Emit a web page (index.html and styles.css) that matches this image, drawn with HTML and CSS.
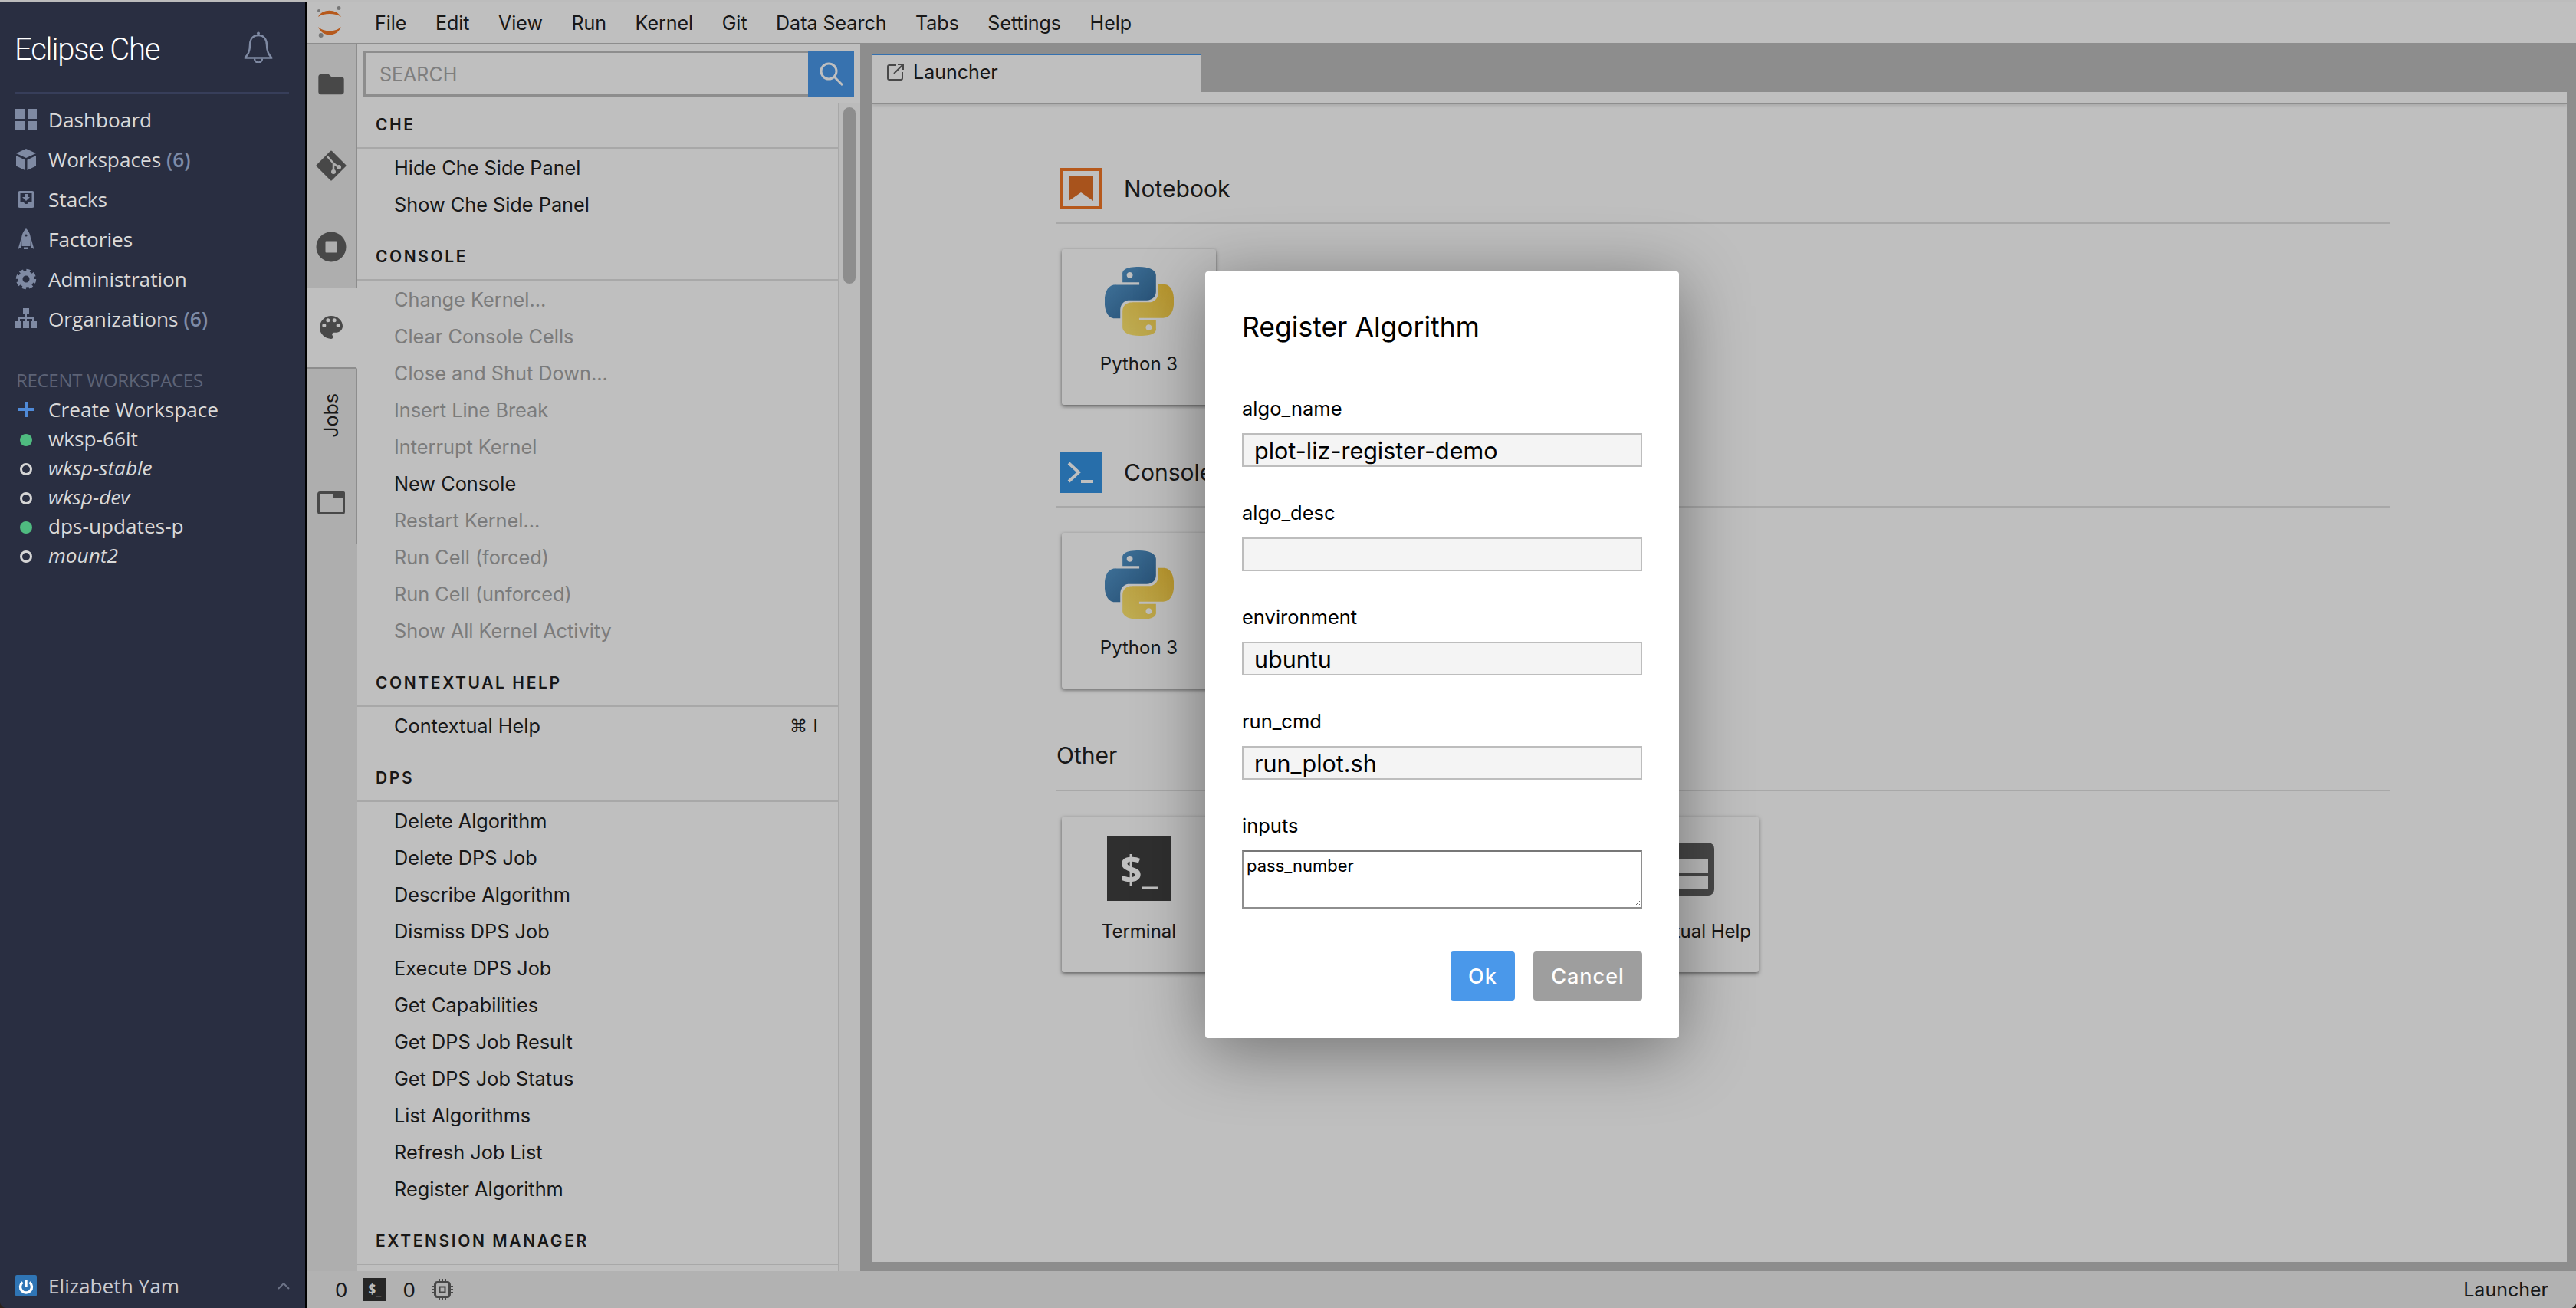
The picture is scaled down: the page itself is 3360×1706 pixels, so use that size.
FILE: index.html
```html
<!DOCTYPE html>
<html lang="en">
<head>
<meta charset="utf-8">
<title>Eclipse Che</title>
<link rel="stylesheet" href="styles.css">
</head>
<body>
<svg class="defs" aria-hidden="true">
  <defs>
    <linearGradient id="pyblue" x1="0" y1="0" x2="1" y2="1"><stop offset="0" stop-color="#5a9fd4"/><stop offset="1" stop-color="#2f6596"/></linearGradient>
    <linearGradient id="pyyellow" x1="0" y1="1" x2="1" y2="0"><stop offset="0" stop-color="#ffe873"/><stop offset="1" stop-color="#f5c63a"/></linearGradient>
    <symbol id="python" viewBox="0 0 24 24">
      <path fill="url(#pyblue)" fill-rule="evenodd" d="M14.25.18l.9.2.73.26.59.3.45.32.34.34.25.34.16.33.1.3.04.26.02.2-.01.13V8.5l-.05.63-.13.55-.21.46-.26.38-.3.31-.33.25-.35.19-.35.14-.33.1-.3.07-.26.04-.21.02H8.77l-.69.05-.59.14-.5.22-.41.27-.33.32-.27.35-.2.36-.15.37-.1.35-.07.32-.04.27-.02.21v3.06H3.17l-.21-.03-.28-.07-.32-.12-.35-.18-.36-.26-.36-.36-.35-.46-.32-.59-.28-.73-.21-.88-.14-1.05-.05-1.23.06-1.22.16-1.04.24-.87.32-.71.36-.57.4-.44.42-.33.42-.24.4-.16.36-.1.32-.05.24-.01h.16l.06.01h8.16v-.83H6.18l-.01-2.75-.02-.37.05-.34.11-.31.17-.28.25-.26.31-.23.38-.2.44-.18.51-.15.58-.12.64-.1.71-.06.77-.04.84-.02 1.27.05zm-6.3 1.98l-.23.33-.08.41.08.41.23.34.33.22.41.09.41-.09.33-.22.23-.34.08-.41-.08-.41-.23-.33-.33-.22-.41-.09-.41.09z"/>
      <path fill="url(#pyyellow)" fill-rule="evenodd" d="M21.04 6.11l.28.06.32.12.35.18.36.27.36.35.35.47.32.59.28.73.21.88.14 1.04.05 1.23-.06 1.23-.16 1.04-.24.86-.32.71-.36.57-.4.45-.42.33-.42.24-.4.16-.36.09-.32.05-.24.02-.16-.01h-8.22v.82h5.84l.01 2.76.02.36-.05.34-.11.31-.17.29-.25.25-.31.24-.38.2-.44.17-.51.15-.58.13-.64.09-.71.07-.77.04-.84.01-1.27-.04-1.07-.14-.9-.2-.73-.25-.59-.3-.45-.33-.34-.34-.25-.34-.16-.33-.1-.3-.04-.25-.02-.2.01-.13v-5.34l.05-.64.13-.54.21-.46.26-.38.3-.32.33-.24.35-.2.35-.14.33-.1.3-.06.26-.04.21-.02.13-.01h5.84l.69-.05.59-.14.5-.21.41-.28.33-.32.27-.35.2-.36.15-.36.1-.35.07-.32.04-.28.02-.21V6.07h2.09l.14.01zm-6.47 14.25l-.23.33-.08.41.08.41.23.33.33.23.41.08.41-.08.33-.23.23-.33.08-.41-.08-.41-.23-.33-.33-.23-.41-.08-.41.08z"/>
    </symbol>
  </defs>
</svg>
<div class="app">
  <aside class="che-nav">
    <header class="che-head">
      <h1 class="che-title">Eclipse Che</h1>
      <svg class="bell" viewBox="0 0 38 42"><path d="M19 6C11 6 8 12 8 19c0 8-2 12-6.500 16.500h35C32 31 30 27 30 19c0-7-3-13-11-13z" fill="none" stroke="#7f8aa3" stroke-width="2.400" stroke-linejoin="round"/><circle cx="19" cy="3.500" r="2" fill="#7f8aa3"/><path d="M14 36.500a5 5 0 0 0 10 0" fill="none" stroke="#7f8aa3" stroke-width="2.400"/></svg>
    </header>
    <nav class="che-menu">
      <a class="che-item"><svg class="che-ico" viewBox="0 0 28 28"><path d="M0 0h12v13H0zM16 0h12v13H16zM0 16h12v12H0zM16 16h12v12H16z"/></svg>Dashboard</a>
      <a class="che-item"><svg class="che-ico" viewBox="0 0 28 28"><path d="M14 0l13 6-13 6L1 6zM1 9l11.500 5.500V28L1 22.500zM27 9l-11.500 5.500V28L27 22.500z"/></svg>Workspaces&nbsp;<b class="count">(6)</b></a>
      <a class="che-item"><svg class="che-ico" viewBox="0 0 28 28"><rect x="3.500" y="3" width="21" height="22" rx="2.500"/><path class="cut" d="M6.500 6h15v11h-4l-2 3h-3l-2-3h-4z"/><path d="M12 7h4v4h3l-5 5-5-5h3z"/></svg>Stacks</a>
      <a class="che-item"><svg class="che-ico" viewBox="0 0 28 28"><path d="M14 0c4 3.500 6 9 6 14l-.5 9h-11L8 14c0-5 2-10.500 6-14zM7 15L3.500 27l4.500-2.500zM21 15l3.500 12-4.500-2.500zM11 24.500h6V27h-6z"/><circle class="cut" cx="14" cy="9" r="1.600"/></svg>Factories</a>
      <a class="che-item"><svg class="che-ico" viewBox="0 0 28 28"><circle class="ring" cx="14" cy="14" r="7.500"/><circle class="teeth" cx="14" cy="14" r="11.200"/></svg>Administration</a>
      <a class="che-item"><svg class="che-ico" viewBox="0 0 28 28"><path d="M10 0h8v8h-8zM13 8h2v4h9v5h-2v-3h-7v3h-2v-3H6v3H4v-5h9zM0 17h8v9H0zM10 17h8v9h-8zM20 17h8v9h-8z"/></svg>Organizations&nbsp;<b class="count">(6)</b></a>
    </nav>
    <section class="recent">
      <h2 class="recent-title">RECENT WORKSPACES</h2>
      <a class="recent-item"><svg class="plus" viewBox="0 0 20 20"><path d="M8 0h4v8h8v4h-8v8H8v-8H0V8h8z"/></svg>Create Workspace</a>
      <a class="recent-item"><i class="dot on"></i>wksp-66it</a>
      <a class="recent-item stopped"><i class="dot"></i>wksp-stable</a>
      <a class="recent-item stopped"><i class="dot"></i>wksp-dev</a>
      <a class="recent-item"><i class="dot on"></i>dps-updates-p</a>
      <a class="recent-item stopped"><i class="dot"></i>mount2</a>
    </section>
    <footer class="user">
      <svg class="avatar" viewBox="0 0 28 28"><rect width="28" height="28" rx="2" fill="#2f75b5"/><path d="M9.500 9.500a7.500 7.500 0 1 0 9 0" fill="none" stroke="#fff" stroke-width="3.400"/><path d="M14 6v9" stroke="#fff" stroke-width="3.400"/></svg>
      <span class="user-name">Elizabeth Yam</span>
      <svg class="chevron" viewBox="0 0 16 9"><path d="M1 8l7-7 7 7" fill="none" stroke="#6d7488" stroke-width="2"/></svg>
    </footer>
  </aside>

  <div class="lab">
    <div class="menubar">
      <svg class="jup" viewBox="0 0 36 42"><path class="o" d="M3 14C8 3 27 3 33 14 26 8.500 10 8.500 3 14z"/><path class="o" d="M3 27C9 41 27 41 33 27 26 34 10 34 3 27z"/><circle class="g" cx="4" cy="6" r="2"/><circle class="g" cx="30" cy="2.500" r="2.500"/><circle class="g" cx="6.700" cy="38" r="3"/></svg>
      <a class="menu-item">File</a><a class="menu-item">Edit</a><a class="menu-item">View</a><a class="menu-item">Run</a><a class="menu-item">Kernel</a><a class="menu-item">Git</a><a class="menu-item">Data Search</a><a class="menu-item">Tabs</a><a class="menu-item">Settings</a><a class="menu-item">Help</a>
    </div>
    <div class="workspace">
      <div class="tabbar">
        <div class="side-tab"><svg class="ti" viewBox="0 0 24 24"><path d="M10 4H4c-1.100 0-2 .9-2 2v12c0 1.100.9 2 2 2h16c1.100 0 2-.9 2-2V8c0-1.100-.9-2-2-2h-8l-2-2z"/></svg></div>
        <div class="side-tab"><svg class="ti" viewBox="0 0 40 40"><path d="M20 2l18 18-18 18L2 20z" stroke="#616161" stroke-width="3" stroke-linejoin="round"/><path class="tl" d="M15 8l8 9v10M23 17l7 5.500"/><circle class="tc" cx="23" cy="28" r="3"/><circle class="tc" cx="30" cy="22" r="3"/></svg></div>
        <div class="side-tab"><svg class="ti" viewBox="0 0 40 40"><circle cx="20" cy="20" r="19.500"/><rect class="tc" x="12.500" y="12.500" width="15" height="15" rx="1"/></svg></div>
        <div class="side-tab active"><svg class="ti" viewBox="0 0 24 24"><path fill-rule="evenodd" d="M12 3a9 9 0 0 0 0 18c.83 0 1.500-.67 1.500-1.500 0-.39-.15-.74-.39-1.010-.23-.26-.38-.61-.38-.99 0-.83.67-1.500 1.500-1.500H16c2.760 0 5-2.240 5-5 0-4.420-4.030-8-9-8zm-5.500 9a1.500 1.500 0 1 1 0-3 1.500 1.500 0 0 1 0 3zm3-4a1.500 1.500 0 1 1 0-3 1.500 1.500 0 0 1 0 3zm5 0a1.500 1.500 0 1 1 0-3 1.500 1.500 0 0 1 0 3zm3 4a1.500 1.500 0 1 1 0-3 1.500 1.500 0 0 1 0 3z"/></svg></div>
        <div class="side-tab jobs"><span class="jobs-label">Jobs</span></div>
        <div class="side-tab"><svg class="ti wide" viewBox="0 0 36 30"><rect x="1.500" y="1.500" width="33" height="27" rx="2" fill="none" stroke="#616161" stroke-width="3"/><path d="M20 0h14a2 2 0 0 1 2 2v7H20z"/></svg></div>
      </div>

      <div class="sidepanel">
        <div class="search-row">
          <div class="search-box">SEARCH</div>
          <button class="search-btn"><svg class="search-ico" viewBox="0 0 32 32"><circle cx="13" cy="13" r="10" fill="none" stroke="#fff" stroke-width="3"/><path d="M20 20l11 11" stroke="#fff" stroke-width="3"/></svg></button>
        </div>
        <div class="palette">
          <div class="palette-list">
            <section class="pal-sec"><h3 class="pal-head">CHE</h3>
              <ul class="pal-items"><li>Hide Che Side Panel</li><li>Show Che Side Panel</li></ul></section>
            <section class="pal-sec"><h3 class="pal-head">CONSOLE</h3>
              <ul class="pal-items">
                <li class="off">Change Kernel...</li><li class="off">Clear Console Cells</li><li class="off">Close and Shut Down...</li><li class="off">Insert Line Break</li><li class="off">Interrupt Kernel</li><li>New Console</li><li class="off">Restart Kernel...</li><li class="off">Run Cell (forced)</li><li class="off">Run Cell (unforced)</li><li class="off">Show All Kernel Activity</li>
              </ul></section>
            <section class="pal-sec"><h3 class="pal-head">CONTEXTUAL HELP</h3>
              <ul class="pal-items"><li>Contextual Help<span class="kbd">⌘ I</span></li></ul></section>
            <section class="pal-sec"><h3 class="pal-head">DPS</h3>
              <ul class="pal-items">
                <li>Delete Algorithm</li><li>Delete DPS Job</li><li>Describe Algorithm</li><li>Dismiss DPS Job</li><li>Execute DPS Job</li><li>Get Capabilities</li><li>Get DPS Job Result</li><li>Get DPS Job Status</li><li>List Algorithms</li><li>Refresh Job List</li><li>Register Algorithm</li>
              </ul></section>
            <section class="pal-sec"><h3 class="pal-head">EXTENSION MANAGER</h3></section>
          </div>
          <div class="scrolltrack"><div class="scrollthumb"></div></div>
        </div>
      </div>

      <main class="dock">
        <div class="doc-tabs">
          <div class="doc-tab"><svg class="doc-ico" viewBox="0 0 22 22"><path d="M12 2H3a2 2 0 0 0-2 2v15a2 2 0 0 0 2 2h15a2 2 0 0 0 2-2v-8M9 13L21 1M14 1h7v7" fill="none" stroke="#616161" stroke-width="2"/></svg>Launcher</div>
        </div>
        <div class="doc-body">
          <div class="doc-strip"></div>
          <div class="launcher">
            <section class="lsec">
              <div class="lsec-head"><svg class="lsec-ico" viewBox="0 0 54 54"><rect x="2" y="2" width="50" height="50" fill="none" stroke="#f37726" stroke-width="4"/><path fill="#e06f26" d="M11 11h32v32L27 32 11 43z"/></svg><h2 class="lsec-title">Notebook</h2></div>
              <div class="cards">
                <div class="card"><div class="card-ico"><svg class="py"><use href="#python"/></svg></div><div class="card-label">Python 3</div></div>
              </div>
            </section>
            <section class="lsec">
              <div class="lsec-head"><svg class="lsec-ico" viewBox="0 0 54 54"><rect width="54" height="54" fill="#3593e3"/><path d="M11 15l13 12-13 12" fill="none" stroke="#fff" stroke-width="4"/><path d="M27 37h16v4H27z" fill="#fff"/></svg><h2 class="lsec-title">Console</h2></div>
              <div class="cards">
                <div class="card"><div class="card-ico"><svg class="py"><use href="#python"/></svg></div><div class="card-label">Python 3</div></div>
              </div>
            </section>
            <section class="lsec">
              <div class="lsec-head"><h2 class="lsec-title plain">Other</h2></div>
              <div class="cards">
                <div class="card"><div class="card-ico"><div class="term">$_</div></div><div class="card-label">Terminal</div></div>
                <div class="card"><div class="card-ico"></div><div class="card-label">Text File</div></div>
                <div class="card"><div class="card-ico"></div><div class="card-label">Markdown</div></div>
                <div class="card"><div class="card-ico"><svg class="help" viewBox="0 0 85 69"><rect width="85" height="69" rx="8" fill="#616161"/><path fill="#fff" d="M8 22h69v17H8zM8 44h69v16H8z"/></svg></div><div class="card-label">Contextual Help</div></div>
              </div>
            </section>
          </div>
        </div>
      </main>
    </div>
    <div class="statusbar">
      <span class="st-num">0</span>
      <span class="st-term">$_</span>
      <span class="st-num">0</span>
      <svg class="st-chip" viewBox="0 0 28 28"><rect x="4.500" y="4.500" width="19" height="19" rx="3" fill="none" stroke="#616161" stroke-width="3"/><rect x="10.500" y="10.500" width="7" height="7" fill="none" stroke="#616161" stroke-width="2"/><path d="M10 0v4M14 0v4M18 0v4M10 24v4M14 24v4M18 24v4M0 10h4M0 14h4M0 18h4M24 10h4M24 14h4M24 18h4" stroke="#616161" stroke-width="2"/></svg>
      <span class="st-right">Launcher</span>
    </div>

    <div class="overlay">
      <div class="dialog">
        <h2 class="dlg-title">Register Algorithm</h2>
        <label class="fld"><span class="fld-label">algo_name</span><span class="fld-input">plot-liz-register-demo</span></label>
        <label class="fld"><span class="fld-label">algo_desc</span><span class="fld-input"></span></label>
        <label class="fld"><span class="fld-label">environment</span><span class="fld-input">ubuntu</span></label>
        <label class="fld"><span class="fld-label">run_cmd</span><span class="fld-input">run_plot.sh</span></label>
        <label class="fld"><span class="fld-label">inputs</span><textarea class="fld-area">pass_number</textarea></label>
        <div class="dlg-actions">
          <button class="btn ok">Ok</button>
          <button class="btn cancel">Cancel</button>
        </div>
      </div>
    </div>
  </div>
</div>
</body>
</html>
```
FILE: styles.css
```css
* { box-sizing: border-box; }
html, body { margin: 0; padding: 0; height: 100%; overflow: hidden; background: #2a211a; }
h1, h2, h3, ul { margin: 0; padding: 0; font-weight: normal; }
ul { list-style: none; }
button { border: 0; padding: 0; font: inherit; }
.defs { position: absolute; width: 0; height: 0; }

.app { display: flex; width: 3360px; height: 1706px; border-top: 2px solid #bcbcbc; border-radius: 0 0 8px 8px; overflow: hidden; }

/* Che navigation */
.che-nav { width: 400px; flex: none; display: flex; flex-direction: column; background: #292e41; border-right: 2px solid #000; font-family: "Open Sans", sans-serif; color: #d9d9d9; }
.che-head { height: 120px; margin: 0 21px 0 20px; border-bottom: 2px solid #373e5a; display: flex; justify-content: space-between; align-items: flex-start; }
.che-title { font-family: Roboto, "Liberation Sans", sans-serif; font-size: 40px; letter-spacing: -1.200px; color: #fff; margin: 40px 0 0 -1px; line-height: 46px; font-weight: 300; }
.bell { width: 38px; height: 42px; margin: 38px 21px 0 0; }
.che-menu { padding-top: 8px; }
.che-item { height: 52px; display: flex; align-items: center; font-size: 26.200px; padding-left: 20px; }
.che-ico { width: 28px; height: 28px; margin-right: 15px; flex: none; fill: #7f8aa3; }
.che-ico .cut { fill: #292e41; }
.che-ico .ring { fill: none; stroke: #7f8aa3; stroke-width: 6; }
.che-ico .teeth { fill: none; stroke: #7f8aa3; stroke-width: 4; stroke-dasharray: 5 3.800; }
.count { font-weight: 600; color: #7e8ba6; }
.recent { margin-top: 35px; }
.recent-title { height: 38px; line-height: 38px; padding-left: 21px; font-size: 24px; letter-spacing: -0.3px; color: #5d6376; }
.recent-item { height: 38px; display: flex; align-items: center; font-size: 26.200px; padding-left: 26px; }
.recent-item.stopped { font-style: italic; }
.plus { width: 20px; height: 20px; fill: #4f8ad8; margin-left: -2px; margin-right: 19px; flex: none; }
.dot { width: 16px; height: 16px; border-radius: 50%; margin-right: 21px; margin-top: 4px; flex: none; border: 3px solid #d5d5d5; }
.dot.on { background: #4fbb80; border-color: #4fbb80; }
.user { margin-top: auto; height: 58px; display: flex; align-items: center; padding: 0 20px; font-size: 26.200px; }
.avatar { width: 28px; height: 28px; margin-right: 15px; flex: none; }
.user-name { flex: 1; color: #c9cbd1; }
.chevron { width: 16px; height: 9px; flex: none; }

/* JupyterLab shell */
.lab { flex: 1; position: relative; display: flex; flex-direction: column; background: #fff; font-family: Inter, "Liberation Sans", sans-serif; color: #212121; }
.menubar { height: 55px; flex: none; display: flex; align-items: center; border-bottom: 1px solid #bdbdbd; padding: 2px 0 0 12px; font-size: 25px; }
.jup { width: 36px; height: 42px; margin: -2px 25px 0 0; flex: none; }
.jup .o { fill: #f37726; }
.jup .g { fill: #9e9e9e; }
.menu-item { padding: 0 21.500px 0 16px; }

.workspace { flex: 1; min-height: 0; display: flex; background: #bdbdbd; }
.tabbar { width: 66px; flex: none; background: #e8e8e8; }
.side-tab { height: 106px; width: 66px; display: flex; align-items: center; justify-content: center; background: #e8e8e8; border-right: 2px solid #bdbdbd; }
.side-tab.active { background: #fff; border-right-color: #fff; border-bottom: 2px solid #bdbdbd; }
.side-tab.jobs { height: 122px; }
.jobs-label { writing-mode: vertical-rl; transform: rotate(180deg); font-size: 25px; }
.ti { width: 40px; height: 40px; fill: #616161; }
.ti.wide { width: 36px; height: 30px; }
.ti .tl { fill: none; stroke: #e8e8e8; stroke-width: 2.500; }
.ti .tc { fill: #e8e8e8; }
.sidepanel { width: 656px; flex: none; display: flex; flex-direction: column; background: #fff; }
.search-row { height: 77px; flex: none; display: flex; padding: 9px 8px 8px; }
.search-box { flex: 1; height: 60px; border: 3px solid #bdbdbd; border-right: 0; padding: 1px 0 0 18px; line-height: 54px; font-size: 25px; color: #a9a9a9; }
.search-btn { width: 60px; height: 60px; background: #4a98ea; display: flex; align-items: center; justify-content: center; flex: none; }
.search-ico { width: 32px; height: 32px; }
.palette { flex: 1; min-height: 0; display: flex; overflow: hidden; }
.palette-list { flex: 1; min-width: 0; }
.scrolltrack { width: 29px; flex: none; border-left: 2px solid #e0e0e0; padding: 6px 6px 0 5px; background: #fafafa; }
.scrollthumb { height: 230px; border-radius: 8px; background: #bdbdbd; }
.pal-sec { margin-bottom: 15px; }
.pal-head { height: 60px; padding: 16px 0 0 24px; line-height: 26px; border-bottom: 2px solid #e0e0e0; font-size: 21px; font-weight: 600; letter-spacing: 2.600px; color: #1f1f1f; }
.pal-items { margin-top: 1px; font-size: 25.300px; }
.pal-items li { height: 48px; line-height: 48px; padding: 0 26px 0 48px; display: flex; justify-content: space-between; }
.pal-items li.off { color: #a5a5a5; }
.kbd { font-family: "DejaVu Sans", sans-serif; font-size: 23px; }

.dock { flex: 1; min-width: 0; display: flex; flex-direction: column; padding: 13px 12px 12px 16px; }
.doc-tabs { height: 50px; flex: none; display: flex; }
.doc-tab { width: 428px; background: #fff; border-top: 2px solid #4696ea; display: flex; align-items: center; padding: 0 0 4px 19px; font-size: 25px; height: 50px; }
.doc-ico { width: 22px; height: 22px; margin-right: 12px; }
.doc-body { flex: 1; min-height: 0; background: #fff; overflow: hidden; }
.doc-strip { height: 16px; border-bottom: 2px solid #bdbdbd; box-shadow: 0 2px 4px rgba(0,0,0,.12); }
.launcher { width: 1740px; margin-left: 240px; padding-top: 83px; }
.lsec { margin-bottom: 61px; }
.lsec-head { height: 73px; padding-bottom: 17px; border-bottom: 2px solid #e0e0e0; display: flex; align-items: center; }
.lsec-ico { width: 54px; height: 54px; margin: 0 29px 0 5px; flex: none; }
.lsec-title { font-size: 30px; color: #212121; }
.lsec-title.plain { margin-top: -2px; }
.cards { display: flex; gap: 35px; margin: 33px 0 0 7px; }
.card { width: 201px; height: 203px; background: #fff; border-radius: 3px; box-shadow: 0 2px 5px rgba(0,0,0,.5); padding-top: 18px; text-align: center; }
.card-ico { height: 100px; display: flex; align-items: center; justify-content: center; }
.py { width: 90px; height: 92px; }
.term { width: 84px; height: 84px; background: #3f3f3f; color: #fff; font-family: "Open Sans", sans-serif; font-weight: 700; font-size: 50px; line-height: 84px; text-align: center; }
.help { width: 85px; height: 69px; }
.card-label { margin-top: 16px; line-height: 32px; font-size: 24px; white-space: nowrap; }

.statusbar { height: 48px; flex: none; display: flex; align-items: center; background: #eee; padding: 0 36px 0 37px; font-size: 25px; }
.st-num { font-size: 26px; }
.st-term { width: 29px; height: 30px; margin: 0 22px 0 21px; background: #333; color: #fff; font-family: "Open Sans", sans-serif; font-weight: 700; font-size: 17px; line-height: 30px; text-align: center; }
.st-chip { width: 28px; height: 28px; margin-left: 21px; }
.st-right { margin-left: auto; }

/* Modal */
.overlay { position: absolute; inset: 0; background: rgba(0,0,0,.25); display: flex; align-items: center; justify-content: center; }
.dialog { width: 618px; height: 1000px; margin-left: 2px; background: #fff; border-radius: 4px; box-shadow: 0 15px 90px rgba(0,0,0,.42); padding: 50px 48px 0; color: #000; }
.dlg-title { font-size: 35.500px; line-height: 46px; height: 46px; margin-bottom: 67px; }
.fld { display: block; margin-bottom: 44px; }
.fld-label { display: block; font-size: 25.500px; line-height: 32px; height: 32px; margin-bottom: 16px; }
.fld-input { display: block; height: 44px; background: #f4f4f4; border: 2px solid #bdbdbd; padding-left: 14px; font-size: 30.500px; line-height: 42px; }
.fld-area { display: block; width: 522px; height: 76px; padding: 5px 4px; border: 2px solid #8e8e8e; border-top-color: #777; font-family: Inter, sans-serif; font-size: 22px; color: #000; background: #fff; margin: 0; outline: 0; }
.dlg-actions { display: flex; justify-content: flex-end; gap: 24px; margin-top: 56px; }
.btn { height: 64px; border-radius: 4px; color: #fff; font-family: Inter, sans-serif; font-size: 27px; font-weight: 500; letter-spacing: 1px; }
.btn.ok { width: 84px; background: #4a98ea; }
.btn.cancel { width: 142px; background: #9e9e9e; }
```
